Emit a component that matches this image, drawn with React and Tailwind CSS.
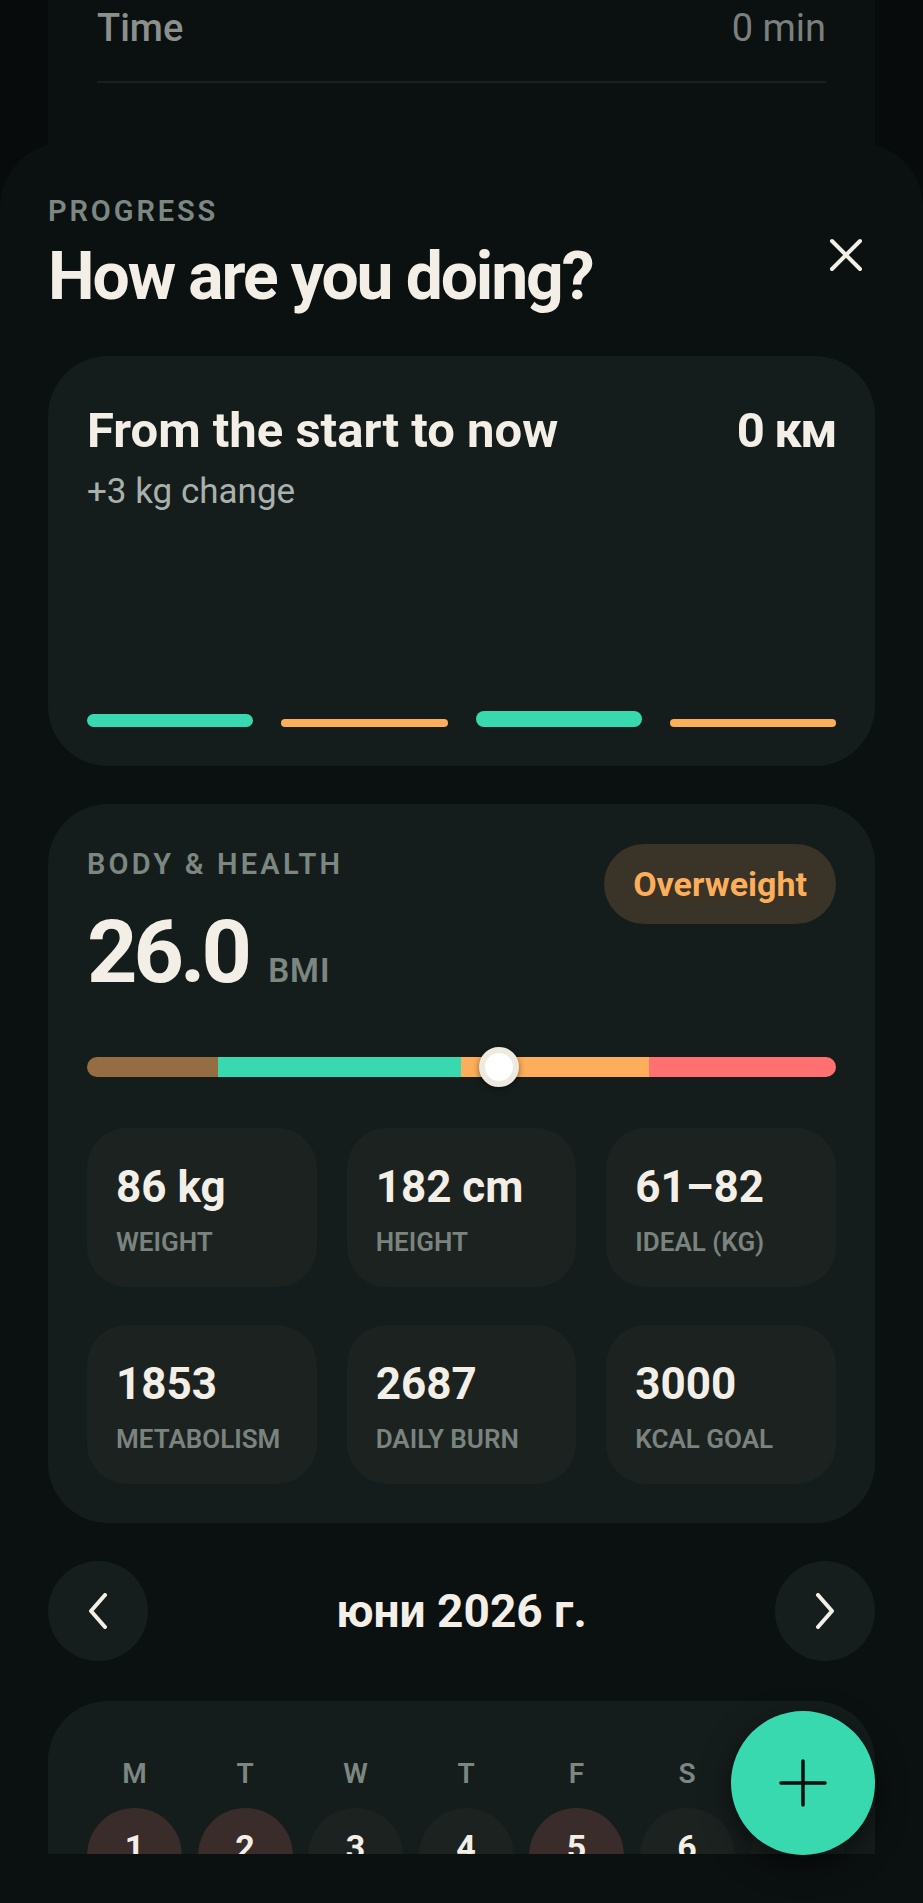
import React from 'react'

const stats = [
  { value: '86 kg', label: 'WEIGHT' },
  { value: '182 cm', label: 'HEIGHT' },
  { value: '61–82', label: 'IDEAL (KG)' },
  { value: '1853', label: 'METABOLISM' },
  { value: '2687', label: 'DAILY BURN' },
  { value: '3000', label: 'KCAL GOAL' },
]

const weekdays = ['M', 'T', 'W', 'T', 'F', 'S', 'S']

const days = [
  { n: 1, logged: true },
  { n: 2, logged: true },
  { n: 3, logged: false },
  { n: 4, logged: false },
  { n: 5, logged: true },
  { n: 6, logged: false },
  { n: 7, logged: false },
]

function Chevron({ dir }) {
  return (
    <svg width="22" height="36" viewBox="0 0 22 36" fill="none">
      <polyline
        points={dir === 'left' ? '18,2 4,18 18,34' : '4,2 18,18 4,34'}
        stroke="#f3efe7"
        strokeWidth="4"
        strokeLinecap="round"
        strokeLinejoin="round"
      />
    </svg>
  )
}

export default function App() {
  return (
    <div className="relative h-[1903px] w-[923px] overflow-hidden bg-[#070b0b] font-['Roboto',sans-serif]">
      {/* Card behind the sheet */}
      <div className="mx-[48px] h-[260px] bg-[#0b1111] px-[49px]">
        <div className="flex h-[55px] items-center justify-between text-[38px] leading-none">
          <span className="font-medium text-[#8b908d]">Time</span>
          <span className="text-[#7b807d]">0 min</span>
        </div>
        <div className="mt-[26px] h-[2px] bg-[#182020]" />
      </div>

      {/* Bottom sheet */}
      <div className="relative -mt-[117px] h-[1760px] rounded-t-[64px] bg-[#0b1010]">
        <div className="h-[1711px] overflow-hidden px-[48px] pt-[54px]">
          {/* Header */}
          <div className="flex items-start justify-between">
            <div>
              <div className="text-[29px] font-semibold leading-none tracking-[0.1em] text-[#7d8782]">
                PROGRESS
              </div>
              <h1 className="mt-[18px] text-[66px] font-bold leading-none tracking-[-0.032em] text-[#f3efe7]">
                How are you doing?
              </h1>
            </div>
            <button className="mt-[29px] flex h-[58px] w-[58px] items-center justify-center">
              <svg width="36" height="36" viewBox="0 0 36 36" fill="none">
                <path d="M4 4L32 32M32 4L4 32" stroke="#f3efe7" strokeWidth="4" strokeLinecap="round" />
              </svg>
            </button>
          </div>

          {/* From the start card */}
          <div className="mt-[46px] flex h-[410px] flex-col rounded-[60px] bg-[#151d1c] px-[39px] pt-[50px] pb-[39px]">
            <div className="flex items-start justify-between text-[49px] font-bold leading-none text-[#f3efe7]">
              <span>From the start to now</span>
              <span className="tracking-[-0.03em]">0 км</span>
            </div>
            <div className="mt-[19px] text-[35px] leading-none text-[#aab1ac]">+3 kg change</div>
            <div className="mt-auto flex items-end gap-[28px]">
              <div className="h-[13px] flex-1 rounded-full bg-[#38d9ae]" />
              <div className="h-[8px] flex-1 rounded-full bg-[#fdae5a]" />
              <div className="h-[16px] flex-1 rounded-full bg-[#38d9ae]" />
              <div className="h-[8px] flex-1 rounded-full bg-[#fdae5a]" />
            </div>
          </div>

          {/* Body & health card */}
          <div className="mt-[38px] rounded-[60px] bg-[#151d1c] px-[39px] pt-[38px] pb-[39px]">
            <div className="flex items-start justify-between">
              <div className="pt-[8px]">
                <div className="text-[29px] font-semibold leading-none tracking-[0.11em] text-[#7d8782]">
                  BODY &amp; HEALTH
                </div>
                <div className="mt-[29px] flex items-baseline gap-[20px]">
                  <span className="text-[88px] font-bold leading-none tracking-[-0.045em] text-[#f3efe7]">26.0</span>
                  <span className="text-[33px] font-semibold leading-none tracking-[0.03em] text-[#7d8782]">BMI</span>
                </div>
              </div>
              <div className="mt-[2px] flex h-[80px] items-center rounded-full bg-[#393328] px-[29px] text-[34px] font-bold text-[#fdae5a]">
                Overweight
              </div>
            </div>

            {/* BMI scale */}
            <div className="relative mt-[61px] h-[20px]">
              <div className="flex h-full overflow-hidden rounded-full">
                <div className="w-[17.5%] bg-[#946d43]" />
                <div className="w-[32.5%] bg-[#38d9ae]" />
                <div className="w-[25%] bg-[#fdae5a]" />
                <div className="w-[25%] bg-[#ff7070]" />
              </div>
              <div className="absolute top-1/2 left-[55%] h-[40px] w-[40px] -translate-x-1/2 -translate-y-1/2 rounded-full border-[6px] border-[#efeae0] bg-white shadow-[0_2px_6px_rgba(0,0,0,0.45)]" />
            </div>

            {/* Stats */}
            <div className="mt-[51px] grid grid-cols-3 gap-x-[30px] gap-y-[38px]">
              {stats.map((s) => (
                <div key={s.label} className="h-[159px] rounded-[40px] bg-[#1b2220] px-[29px] pt-[37px]">
                  <div className="text-[44px] font-bold leading-none text-[#f3efe7]">{s.value}</div>
                  <div className="mt-[20px] text-[26px] font-semibold leading-none text-[#7b837f]">{s.label}</div>
                </div>
              ))}
            </div>
          </div>

          {/* Month navigation */}
          <div className="mt-[38px] flex items-center justify-between">
            <button className="flex h-[100px] w-[100px] items-center justify-center rounded-full bg-[#151e1d]">
              <Chevron dir="left" />
            </button>
            <div className="text-[46px] font-bold text-[#f3efe7]">юни 2026 г.</div>
            <button className="flex h-[100px] w-[100px] items-center justify-center rounded-full bg-[#151e1d]">
              <Chevron dir="right" />
            </button>
          </div>

          {/* Calendar */}
          <div className="mt-[40px] rounded-t-[60px] bg-[#151d1c] px-[39px] pt-[59px] pb-[40px]">
            <div className="grid grid-cols-[repeat(7,95px)] gap-x-[15.5px]">
              {weekdays.map((d, i) => (
                <div key={i} className="text-center text-[28px] font-semibold leading-none text-[#7d8782]">
                  {d}
                </div>
              ))}
            </div>
            <div className="mt-[20px] grid grid-cols-[repeat(7,95px)] gap-x-[15.5px]">
              {days.map((d) => (
                <div
                  key={d.n}
                  className={`flex h-[120px] justify-center rounded-[48px] pt-[14px] text-[34px] font-bold text-[#f3efe7] ${
                    d.logged ? 'bg-[#3a2c2a]' : 'bg-[#1b2220]'
                  }`}
                >
                  {d.n}
                </div>
              ))}
            </div>
          </div>
        </div>
      </div>

      {/* Floating add button */}
      <button className="absolute top-[1711px] left-[731px] flex h-[144px] w-[144px] items-center justify-center rounded-full bg-[#38d9ae] shadow-[0_10px_30px_rgba(0,0,0,0.55)]">
        <svg width="48" height="48" viewBox="0 0 48 48" fill="none">
          <path d="M24 2V46M2 24H46" stroke="#0a0f0f" strokeWidth="3.5" strokeLinecap="round" />
        </svg>
      </button>
    </div>
  )
}
